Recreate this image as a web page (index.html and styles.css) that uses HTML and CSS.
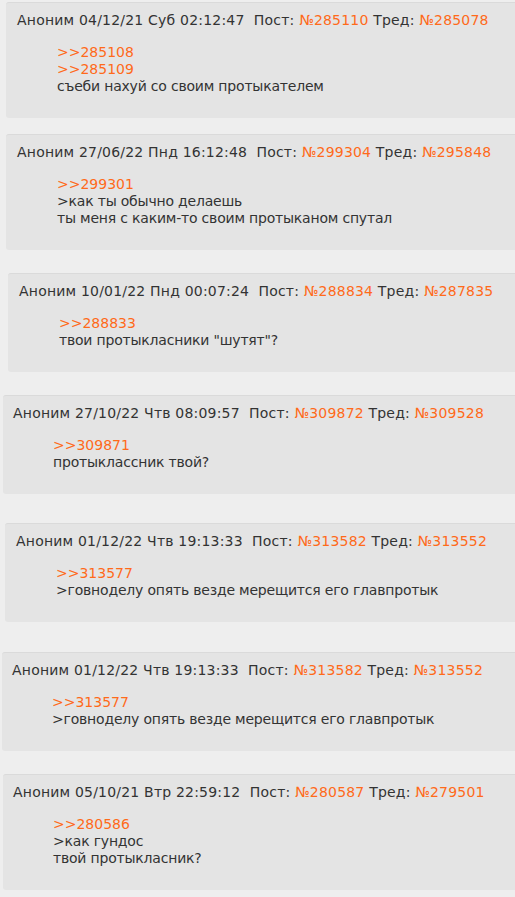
FILE: index.html
```html
<!DOCTYPE html>
<html lang="ru">
<head>
  <meta charset="UTF-8">
  <meta name="viewport" content="width=device-width, initial-scale=1.0">
  <title>Ответы</title>
  <link rel="stylesheet" href="styles.css">
</head>
<body>

  <div class="posts">

    <div class="post">
      <div class="post-head">Аноним 04/12/21 Суб 02:12:47&nbsp; Пост: <a href="#">№285110</a> Тред: <a href="#">№285078</a></div>
      <div class="post-body">
        <a href="#">&gt;&gt;285108</a><br>
        <a href="#">&gt;&gt;285109</a><br>
        съеби нахуй со своим протыкателем
      </div>
    </div>

    <div class="post">
      <div class="post-head">Аноним 27/06/22 Пнд 16:12:48&nbsp; Пост: <a href="#">№299304</a> Тред: <a href="#">№295848</a></div>
      <div class="post-body">
        <a href="#">&gt;&gt;299301</a><br>
        &gt;как ты обычно делаешь<br>
        ты меня с каким-то своим протыканом спутал
      </div>
    </div>

    <div class="post">
      <div class="post-head">Аноним 10/01/22 Пнд 00:07:24&nbsp; Пост: <a href="#">№288834</a> Тред: <a href="#">№287835</a></div>
      <div class="post-body">
        <a href="#">&gt;&gt;288833</a><br>
        твои протыкласники "шутят"?
      </div>
    </div>

    <div class="post">
      <div class="post-head">Аноним 27/10/22 Чтв 08:09:57&nbsp; Пост: <a href="#">№309872</a> Тред: <a href="#">№309528</a></div>
      <div class="post-body">
        <a href="#">&gt;&gt;309871</a><br>
        протыклассник твой?
      </div>
    </div>

    <div class="post">
      <div class="post-head">Аноним 01/12/22 Чтв 19:13:33&nbsp; Пост: <a href="#">№313582</a> Тред: <a href="#">№313552</a></div>
      <div class="post-body">
        <a href="#">&gt;&gt;313577</a><br>
        &gt;говноделу опять везде мерещится его главпротык
      </div>
    </div>

    <div class="post">
      <div class="post-head">Аноним 01/12/22 Чтв 19:13:33&nbsp; Пост: <a href="#">№313582</a> Тред: <a href="#">№313552</a></div>
      <div class="post-body">
        <a href="#">&gt;&gt;313577</a><br>
        &gt;говноделу опять везде мерещится его главпротык
      </div>
    </div>

    <div class="post">
      <div class="post-head">Аноним 05/10/21 Втр 22:59:12&nbsp; Пост: <a href="#">№280587</a> Тред: <a href="#">№279501</a></div>
      <div class="post-body">
        <a href="#">&gt;&gt;280586</a><br>
        &gt;как гундос<br>
        твой протыкласник?
      </div>
    </div>

  </div>

</body>
</html>
```

FILE: styles.css
```css
body {
  margin: 0;
  padding: 0;
  background: #eeeeee;
  color: #333333;
  font-family: 'DejaVu Sans', Verdana, sans-serif;
  overflow: hidden;
}

a {
  color: #ff6a1a;
  text-decoration: none;
}

.posts {
  display: flex;
  flex-direction: column;
  padding-top: 2px;
}

.post {
  width: 560px;
  box-sizing: border-box;
  background: #e4e4e4;
  border-top: 1px solid #dadada;
  border-radius: 3px;
  padding: 9px 0 0 11px;
}

.post-head {
  font-size: 14px;
  letter-spacing: 0.2px;
  line-height: 17px;
  white-space: nowrap;
}

.post-body {
  font-size: 14px;
  letter-spacing: -0.2px;
  line-height: 17px;
  margin: 15px 0 0 40px;
  padding-bottom: 23px;
}

.post-body a {
  letter-spacing: 0;
}

/* the posts were cut from different pages, so the offsets drift a little */
.post:nth-child(1) { margin-left: 6px; }
.post:nth-child(2) { margin: 16px 0 0 6px; }
.post:nth-child(3) { margin: 23px 0 0 8px; }
.post:nth-child(4) { margin: 23px 0 0 3px; padding-left: 10px; }
.post:nth-child(5) { margin: 29px 0 0 5px; }
.post:nth-child(6) { margin: 30px 0 0 2px; padding-left: 10px; }
.post:nth-child(7) { margin: 23px 0 0 3px; padding-left: 10px; }
```
